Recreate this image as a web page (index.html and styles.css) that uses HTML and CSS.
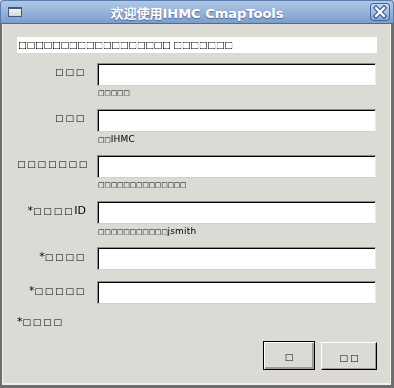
FILE: index.html
```html
<!DOCTYPE html>
<html lang="zh-CN">
<head>
<meta charset="UTF-8" />
<title>欢迎使用IHMC CmapTools</title>
<link rel="stylesheet" href="styles.css">
</head>
<body>

<div class="window">
  <div class="titlebar">
    <span class="win-icon"></span>
    <span class="title">欢迎使用IHMC CmapTools</span>
    <span class="close">
      <svg width="20" height="18" viewBox="0 0 20 18">
        <path d="M6 5 L14 13 M14 5 L6 13" stroke="#3f5f8f" stroke-width="4.5" stroke-linecap="square" />
        <path d="M6 5 L14 13 M14 5 L6 13" stroke="#fff" stroke-width="2.2" stroke-linecap="square" />
      </svg>
    </span>
  </div>

  <div class="frame">
    <div class="notice">□□□□□□□□□□□□□□□□□□ □□□□□□□</div>

    <div class="field">
      <label class="tofu">□□□</label>
      <div class="control">
        <input type="text">
        <div class="hint">□□□□□</div>
      </div>
    </div>

    <div class="field">
      <label class="tofu">□□□</label>
      <div class="control">
        <input type="text">
        <div class="hint">□□<span class="latin">IHMC</span></div>
      </div>
    </div>

    <div class="field">
      <label class="tofu">□□□□□□□</label>
      <div class="control">
        <input type="text">
        <div class="hint">□□□□□□□□□□□□□□</div>
      </div>
    </div>

    <div class="field">
      <label class="tofu"><span class="latin">*</span>□□□□<span class="latin">ID</span></label>
      <div class="control">
        <input type="text">
        <div class="hint">□□□□□□□□□□□<span class="latin">jsmith</span></div>
      </div>
    </div>

    <div class="field">
      <label class="tofu"><span class="latin">*</span>□□□□</label>
      <div class="control">
        <input type="password">
      </div>
    </div>

    <div class="field">
      <label class="tofu"><span class="latin">*</span>□□□□□</label>
      <div class="control">
        <input type="password">
      </div>
    </div>

    <div class="required tofu"><span class="latin">*</span>□□□□</div>

    <div class="actions">
      <button class="btn default"><span class="tofu">□</span></button>
      <button class="btn"><span class="tofu">□□</span></button>
    </div>
  </div>
</div>

</body>
</html>
```

FILE: styles.css
```css
body {
  margin: 0;
  background: #dcdad5;
  font-family: "DejaVu Sans", "Noto Sans CJK SC", sans-serif;
}

.window {
  width: 394px;
  height: 388px;
  display: flex;
  flex-direction: column;
}

/* 标题栏 */
.titlebar {
  height: 24px;
  flex: none;
  display: flex;
  align-items: center;
  box-sizing: border-box;
  border: 1px solid #587bae;
  border-bottom-color: #4d6c9c;
  border-radius: 4px 4px 0 0;
  background: linear-gradient(#b2c8e6, #7c9dcc);
}
.win-icon {
  width: 14px;
  height: 10px;
  margin-left: 7px;
  box-sizing: border-box;
  border: 1px solid #3e5a85;
  border-top-width: 2px;
  background: linear-gradient(#f4f4f4, #d6d6d6);
}
.title {
  flex: 1;
  text-align: center;
  color: #fff;
  font-weight: bold;
  font-size: 13px;
  text-shadow: 0 1px 1px rgba(40, 60, 100, 0.6);
  margin-left: 2px;
}
.close {
  width: 20px;
  height: 18px;
  margin-right: 3px;
  box-sizing: border-box;
  border: 1px solid #44649a;
  border-radius: 3px;
  background: linear-gradient(#c4d5ec, #88a6d3);
  display: flex;
  align-items: center;
  justify-content: center;
}
.close svg {
  display: block;
  margin: -1px;
}

/* 窗口主体 */
.frame {
  flex: 1;
  box-sizing: border-box;
  padding: 13px 14px 0 15px;
  border-left: 2px solid #6e6e6e;
  border-right: 3px solid #6e6e6e;
  border-bottom: 3px solid #6e6e6e;
  box-shadow: inset -1px -2px 0 #f2f1ee, inset 1px 0 0 #f2f1ee;
  background: #dcdad5;
}

/* 缺字方框：去掉彩色边 */
.tofu,
.hint,
.notice {
  color: #000;
  font-weight: bold;
  filter: grayscale(1) contrast(1.8);
}
.tofu {
  font-size: 9px;
  letter-spacing: 1.8px;
}
.latin {
  font-weight: normal;
}
.tofu .latin {
  font-size: 11px;
  letter-spacing: 0;
}

.notice {
  height: 16px;
  line-height: 16px;
  background: #fff;
  padding-left: 1px;
  margin-bottom: 10px;
  font-size: 9.5px;
  letter-spacing: -0.5px;
  white-space: nowrap;
}

.field {
  display: grid;
  grid-template-columns: 69px 279px;
  column-gap: 11px;
  margin-bottom: 11px;
}
.field label {
  text-align: right;
  line-height: 19px;
  white-space: nowrap;
}

.control input {
  display: block;
  width: 100%;
  height: 23px;
  margin: 0;
  box-sizing: border-box;
  border: 1px solid;
  border-color: #8e8c88 #ecebe8 #d2d0cb #8e8c88;
  box-shadow: inset 1px 1px 0 #000;
  background: #fff;
  outline: none;
}
.hint {
  height: 12px;
  line-height: 14px;
  font-size: 7px;
  letter-spacing: -0.3px;
  padding-left: 1px;
  white-space: nowrap;
}
.hint .latin {
  font-size: 9px;
  letter-spacing: 0.2px;
}

.required {
  line-height: 14px;
}

.actions {
  display: flex;
  justify-content: flex-end;
  align-items: flex-start;
  gap: 6px;
  margin-top: 12px;
}
.btn {
  width: 56px;
  height: 28px;
  margin: 1px 0 0;
  padding: 0;
  box-sizing: border-box;
  background: #dcdad5;
  border: 1px solid;
  border-color: #fff #000 #000 #fff;
  box-shadow: inset -1px -1px 0 #9d9a93;
  font-family: "DejaVu Sans", sans-serif;
}
.btn .tofu {
  letter-spacing: 2px;
  margin-right: -2px;
}
.btn.default {
  width: 52px;
  height: 29px;
  margin-top: 0;
  border-color: #000;
  box-shadow: inset 1px 1px 0 #fff, inset -2px -2px 0 #9d9a93;
}
```
